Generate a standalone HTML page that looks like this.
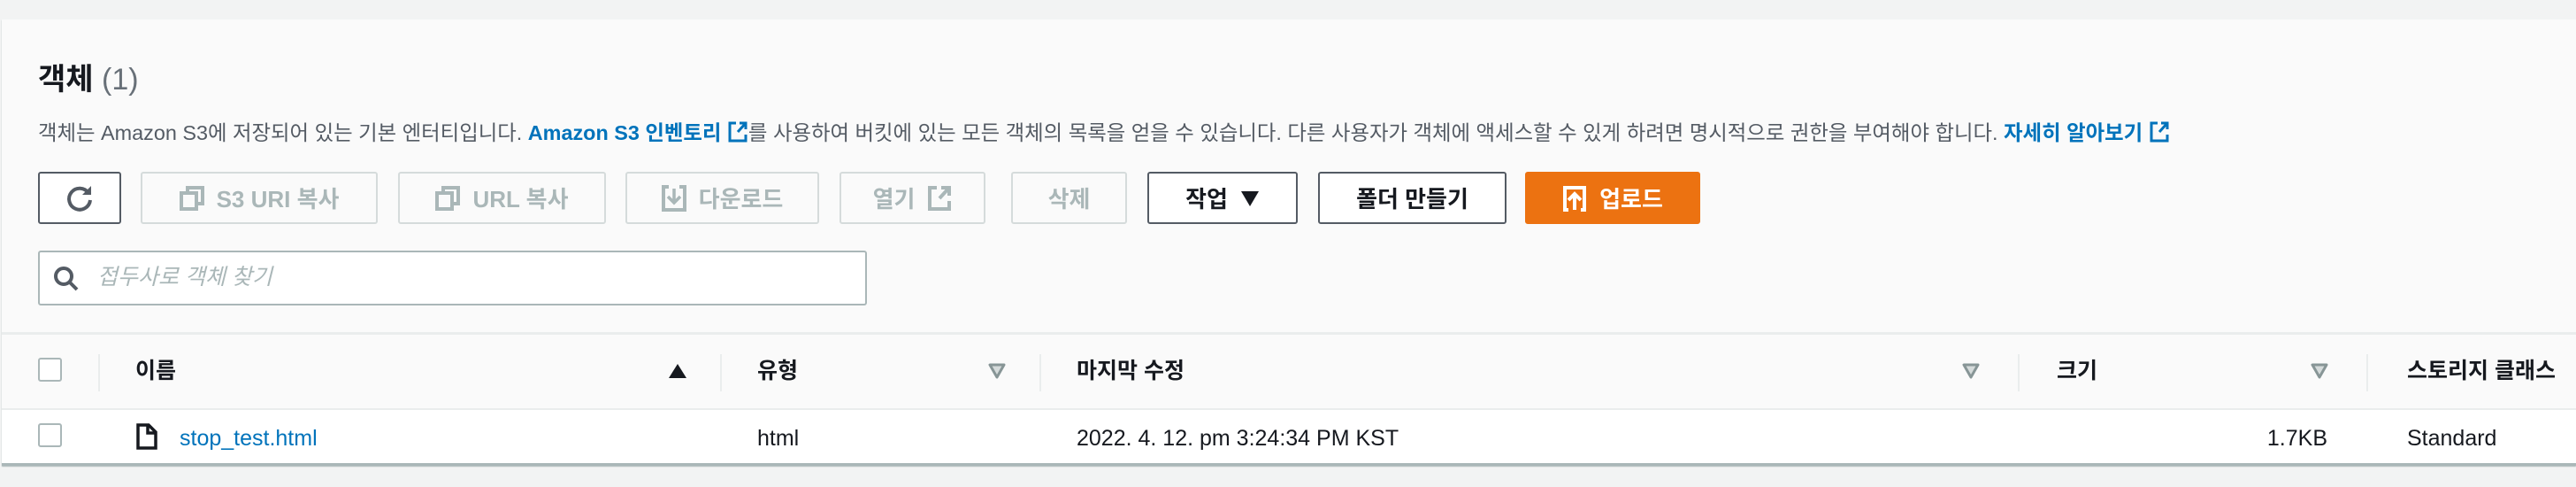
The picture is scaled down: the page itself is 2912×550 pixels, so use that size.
<!DOCTYPE html>
<html><head><meta charset="utf-8"><style>
*{box-sizing:border-box;margin:0;padding:0}
body{width:2912px;height:550px;background:#f2f3f3;position:relative;overflow:hidden;font-family:"Liberation Sans","Noto Sans CJK KR",sans-serif;color:#16191f}
.abs{position:absolute}
.panel{left:2px;top:22px;width:2910px;height:504px;background:#fafafa;box-shadow:0 1px 1px #aab7b8}
.btn{position:absolute;top:194px;height:59px;border:2px solid #d5dbdb;border-radius:3px;background:#fafafa;color:#aab7b8;font-weight:bold;font-size:26px;display:flex;align-items:center;justify-content:center;gap:14px;white-space:nowrap}
.act{border-color:#545b64;color:#16191f;background:#fff}
.hdr{font-weight:bold;font-size:25px;color:#16191f;top:404px;line-height:30px}
.div{top:400px;width:2px;height:42px;background:#eaeded}
.tri{top:410px}
.cb{width:27px;height:27px;border:2px solid #aab7b8;border-radius:3px;background:#fff}
.cell{top:480px;font-size:25px;line-height:30px}
</style></head><body>
<div class="abs panel"></div>
<div class="abs" style="left:2px;top:462px;width:2910px;height:63px;background:#fff"></div>
<div class="abs" style="left:2px;top:375px;width:2910px;height:3px;background:#eaeded"></div>
<div class="abs" style="left:2px;top:461px;width:2910px;height:2px;background:#eaeded"></div>
<div class="abs" style="left:2px;top:523px;width:2910px;height:3px;background:#aab7b8"></div>

<div class="abs" style="left:43px;top:70px;font-size:34px;font-weight:bold;line-height:40px">객체 <span style="font-weight:normal;color:#687078">(1)</span></div>
<div class="abs" style="left:43px;top:135px;font-size:23.4px;line-height:30px;color:#545b64;white-space:nowrap">객체는 Amazon S3에 저장되어 있는 기본 엔터티입니다. <b style="color:#0073bb">Amazon S3 인벤토리 <svg width="24" height="26" viewBox="0 0 24 26" style="vertical-align:-4px"><path d="M10 3H3v20h18v-7" fill="none" stroke="#0073bb" stroke-width="3"/><path d="M14 3h7v7M21 3l-9 10" fill="none" stroke="#0073bb" stroke-width="3"/></svg></b>를 사용하여 버킷에 있는 모든 객체의 목록을 얻을 수 있습니다. 다른 사용자가 객체에 액세스할 수 있게 하려면 명시적으로 권한을 부여해야 합니다. <b style="color:#0073bb">자세히 알아보기 <svg width="24" height="26" viewBox="0 0 24 26" style="vertical-align:-4px"><path d="M10 3H3v20h18v-7" fill="none" stroke="#0073bb" stroke-width="3"/><path d="M14 3h7v7M21 3l-9 10" fill="none" stroke="#0073bb" stroke-width="3"/></svg></b></div>

<div class="btn act" style="left:43px;width:94px"><svg width="34" height="34" viewBox="0 0 34 34"><path d="M27 11A12 12 0 1 0 29 19" fill="none" stroke="#545b64" stroke-width="4"/><path d="M30 3v10H20z" fill="#545b64"/></svg></div>
<div class="btn" style="left:159px;width:268px"><svg width="28" height="28" viewBox="0 0 28 28"><rect x="2" y="8" width="17" height="18" fill="none" stroke="#aab7b8" stroke-width="4"/><path d="M9 8V2h17v18h-7" fill="none" stroke="#aab7b8" stroke-width="4"/></svg>S3 URI 복사</div>
<div class="btn" style="left:450px;width:235px"><svg width="28" height="28" viewBox="0 0 28 28"><rect x="2" y="8" width="17" height="18" fill="none" stroke="#aab7b8" stroke-width="4"/><path d="M9 8V2h17v18h-7" fill="none" stroke="#aab7b8" stroke-width="4"/></svg>URL 복사</div>
<div class="btn" style="left:707px;width:219px"><svg width="28" height="30" viewBox="0 0 28 30"><path d="M8 2H2v26h24V2h-6" fill="none" stroke="#aab7b8" stroke-width="4"/><path d="M14 4v16M7 13l7 7 7-7" fill="none" stroke="#aab7b8" stroke-width="3.5"/></svg>다운로드</div>
<div class="btn" style="left:949px;width:165px">열기 <svg width="28" height="30" viewBox="0 0 28 30"><path d="M11 3H3v24h22v-9" fill="none" stroke="#aab7b8" stroke-width="4"/><path d="M16 3h9v9M25 3l-11 12" fill="none" stroke="#aab7b8" stroke-width="4"/></svg></div>
<div class="btn" style="left:1143px;width:131px">삭제</div>
<div class="btn act" style="left:1297px;width:170px">작업 <svg width="22" height="20" viewBox="0 0 22 20"><path d="M1 2h20L11 19z" fill="#16191f"/></svg></div>
<div class="btn act" style="left:1490px;width:213px">폴더 만들기</div>
<div class="btn" style="left:1724px;width:198px;background:#ec7211;border-color:#ec7211;color:#fff"><svg width="28" height="30" viewBox="0 0 28 30"><path d="M8 3H3v25h4M20 3h5v25h-4" fill="none" stroke="#fff" stroke-width="4"/><path d="M3 3h22" stroke="#fff" stroke-width="4"/><path d="M14 28V11M7 17l7-7 7 7" fill="none" stroke="#fff" stroke-width="4"/></svg>업로드</div>

<div class="abs" style="left:43px;top:283px;width:937px;height:62px;border:2px solid #aab7b8;border-radius:3px;background:#fff"></div>
<svg class="abs" style="left:60px;top:300px" width="30" height="30" viewBox="0 0 30 30"><circle cx="12" cy="12" r="9" fill="none" stroke="#545b64" stroke-width="4"/><path d="M18 18l9 9" stroke="#545b64" stroke-width="4"/></svg>
<div class="abs" style="left:110px;top:297px;font-size:25px;font-style:italic;color:#aab7b8;line-height:32px">접두사로 객체 찾기</div>

<div class="abs cb" style="left:43px;top:404px"></div>
<div class="abs div" style="left:111px"></div>
<div class="abs hdr" style="left:153px">이름</div>
<svg class="abs" style="left:755px;top:410px" width="22" height="18" viewBox="0 0 22 18"><path d="M11 1L21 17H1z" fill="#16191f"/></svg>
<div class="abs div" style="left:814px"></div>
<div class="abs hdr" style="left:856px">유형</div>
<svg class="abs tri" style="left:1117px" width="20" height="18" viewBox="0 0 20 18"><path d="M2 2h16L10 16z" fill="#d5dbdb" stroke="#879596" stroke-width="3" stroke-linejoin="round"/></svg>
<div class="abs div" style="left:1175px"></div>
<div class="abs hdr" style="left:1217px">마지막 수정</div>
<svg class="abs tri" style="left:2218px" width="20" height="18" viewBox="0 0 20 18"><path d="M2 2h16L10 16z" fill="#d5dbdb" stroke="#879596" stroke-width="3" stroke-linejoin="round"/></svg>
<div class="abs div" style="left:2281px"></div>
<div class="abs hdr" style="left:2325px">크기</div>
<svg class="abs tri" style="left:2612px" width="20" height="18" viewBox="0 0 20 18"><path d="M2 2h16L10 16z" fill="#d5dbdb" stroke="#879596" stroke-width="3" stroke-linejoin="round"/></svg>
<div class="abs div" style="left:2675px"></div>
<div class="abs hdr" style="left:2721px">스토리지 클래스</div>

<div class="abs cb" style="left:43px;top:478px"></div>
<svg class="abs" style="left:154px;top:478px" width="24" height="30" viewBox="0 0 24 30"><path d="M2 2h12l8 8v18H2z" fill="none" stroke="#16191f" stroke-width="3.5"/><path d="M13 2v9h9" fill="none" stroke="#16191f" stroke-width="3.5"/></svg>
<div class="abs cell" style="left:203px;color:#0073bb">stop_test.html</div>
<div class="abs cell" style="left:856px">html</div>
<div class="abs cell" style="left:1217px">2022. 4. 12. pm 3:24:34 PM KST</div>
<div class="abs cell" style="left:2500px;width:131px;text-align:right">1.7KB</div>
<div class="abs cell" style="left:2721px">Standard</div>
</body></html>
